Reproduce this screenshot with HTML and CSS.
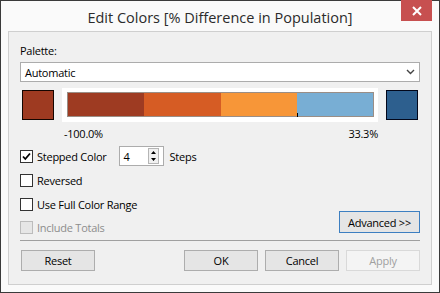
FILE: index.html
```html
<!DOCTYPE html>
<html lang="en">
<head>
  <meta charset="UTF-8">
  <title>Edit Colors</title>
  <link rel="stylesheet" href="styles.css">
</head>
<body>
  <div class="window">
    <div class="titlebar">
      <span class="title">Edit Colors [% Difference in Population]</span>
      <button class="close-btn" aria-label="Close">
        <svg width="10" height="10" viewBox="0 0 10 10"><path d="M1 1 L9 9 M9 1 L1 9" stroke="#fff" stroke-width="2"/></svg>
      </button>
    </div>

    <div class="client">
      <div class="label">Palette:</div>
      <div class="select">
        <span>Automatic</span>
        <svg width="9" height="6" viewBox="0 0 9 6"><path d="M1 1 L4.5 4.5 L8 1" fill="none" stroke="#444" stroke-width="1.4"/></svg>
      </div>

      <div class="ramp-row">
        <div class="swatch swatch-start"></div>
        <div class="ramp">
          <div class="ramp-bar">
            <div class="step step-1"></div>
            <div class="step step-2"></div>
            <div class="step step-3"></div>
            <div class="step step-4"></div>
            <span class="zero-mark"></span>
          </div>
        </div>
        <div class="swatch swatch-end"></div>
      </div>
      <div class="ramp-labels">
        <span>-100.0%</span>
        <span>33.3%</span>
      </div>

      <div class="options">
        <div class="checks">
          <div class="check-row">
            <span class="box">
              <svg width="11" height="11" viewBox="0 0 11 11"><path d="M2 5.5 L4.3 8 L9 2.5" fill="none" stroke="#000" stroke-width="1.8"/></svg>
            </span>
            <span class="check-text">Stepped Color</span>
            <div class="spin">
              <span class="spin-value">4</span>
              <div class="spin-arrows">
                <svg width="9" height="14" viewBox="0 0 9 14"><path d="M4.5 2 L7 5 L2 5 Z M4.5 12 L7 9 L2 9 Z" fill="#000"/></svg>
              </div>
            </div>
            <span class="check-text">Steps</span>
          </div>
          <div class="check-row">
            <span class="box"></span>
            <span class="check-text">Reversed</span>
          </div>
          <div class="check-row">
            <span class="box"></span>
            <span class="check-text">Use Full Color Range</span>
          </div>
          <div class="check-row disabled">
            <span class="box"></span>
            <span class="check-text">Include Totals</span>
          </div>
        </div>
        <button class="btn btn-advanced">Advanced &gt;&gt;</button>
      </div>

      <div class="separator"></div>

      <div class="footer">
        <button class="btn">Reset</button>
        <div class="footer-right">
          <button class="btn">OK</button>
          <button class="btn">Cancel</button>
          <button class="btn btn-disabled">Apply</button>
        </div>
      </div>
    </div>
  </div>
</body>
</html>
```

FILE: styles.css
```css
* {
  box-sizing: border-box;
}

body {
  margin: 0;
  font-family: "Segoe UI", "Open Sans", sans-serif;
  font-size: 11px;
  letter-spacing: -0.25px;
  color: #000;
}

.window {
  width: 440px;
  height: 293px;
  border: 1px solid #3a3a3a;
  background: #fafafa;
  padding: 0 7px 7px 7px;
  display: flex;
  flex-direction: column;
}

.titlebar {
  height: 30px;
  display: flex;
  align-items: center;
  justify-content: center;
  position: relative;
}

.title {
  font-size: 14.5px;
  letter-spacing: 0;
  color: #2b2b2b;
  margin-top: 3px;
}

.close-btn {
  position: absolute;
  top: -1px;
  right: 0;
  width: 31px;
  height: 21px;
  border: none;
  padding: 0;
  background: #c75050;
  display: flex;
  align-items: center;
  justify-content: center;
}

.client {
  flex: 1;
  border: 1px solid #cfcfcf;
  background: #f0f0f0;
  padding: 11px 11px 0 11px;
}

.label {
  height: 15px;
  line-height: 15px;
}

.select {
  margin-top: 4px;
  height: 20px;
  background: #fff;
  border: 1px solid #acacac;
  display: flex;
  align-items: center;
  justify-content: space-between;
  padding: 0 4px 0 4px;
}

/* rampa de colores */
.ramp-row {
  margin-top: 6px;
  margin-left: 2px;
  display: flex;
  align-items: center;
  gap: 8px;
}

.swatch {
  width: 32px;
  height: 30px;
  border: 1px solid #140500;
}

.swatch-start {
  background: #9e3a21;
}

.swatch-end {
  background: #2d5f8e;
  border-color: #02071a;
}

.ramp {
  width: 316px;
  height: 34px;
  background: #fff;
  padding: 4px 4px 4px 5px;
}

.ramp-bar {
  height: 25px;
  border: 1px solid #9a8e86;
  display: flex;
  position: relative;
}

.step {
  flex: 1;
}

.step-1 { background: #9e3b22; }
.step-2 { background: #d65c24; }
.step-3 { background: #f79638; }
.step-4 { background: #78aed4; }

.zero-mark {
  position: absolute;
  left: 75%;
  bottom: -1px;
  width: 1px;
  height: 4px;
  background: #000;
}

.ramp-labels {
  margin-top: 4px;
  margin-left: 43px;
  width: 316px;
  display: flex;
  justify-content: space-between;
  padding: 0 1px 0 1px;
  height: 15px;
  line-height: 15px;
}

/* opciones */
.options {
  margin-top: 5px;
  display: flex;
  justify-content: space-between;
}

.checks {
  display: flex;
  flex-direction: column;
  gap: 4px;
}

.check-row {
  height: 20px;
  display: flex;
  align-items: center;
}

.check-row:last-child {
  height: 19px;
}

.box {
  width: 13px;
  height: 13px;
  border: 1px solid #333;
  background: #fff;
  display: flex;
  align-items: center;
  justify-content: center;
  margin-right: 4px;
}

.check-text {
  line-height: 15px;
}

.disabled .box {
  border-color: #bcbcbc;
  background: #e6e6e6;
}

.disabled .check-text {
  color: #8d8d8d;
}

.spin {
  margin: 0 6px 0 12px;
  width: 45px;
  height: 20px;
  border: 1px solid #acacac;
  background: #fff;
  display: flex;
  align-items: center;
  justify-content: space-between;
  padding: 0 4px 0 4px;
}

.spin-arrows {
  width: 11px;
  height: 16px;
  border: 1px solid #b5b5b5;
  background: #f0f0f0;
  display: flex;
  align-items: center;
  justify-content: center;
}

.btn {
  font-family: inherit;
  font-size: 11px;
  letter-spacing: -0.25px;
  width: 74px;
  height: 21px;
  padding: 0;
  border: 1px solid #adadad;
  background: #e5e5e5;
  color: #000;
}

.btn-advanced {
  align-self: flex-end;
  margin-bottom: 4px;
  width: 81px;
  height: 22px;
  border-color: #3d7fc1;
}

.btn-disabled {
  border-color: #d9d9d9;
  background: #f4f4f4;
  color: #a0a0a0;
}

.separator {
  margin-top: 3px;
  height: 1px;
  background: #a0a0a0;
}

.footer {
  margin-top: 9px;
  display: flex;
  justify-content: space-between;
}

.footer .btn:first-child {
  margin-left: 1px;
}

.footer-right {
  display: flex;
  gap: 7px;
}
```
